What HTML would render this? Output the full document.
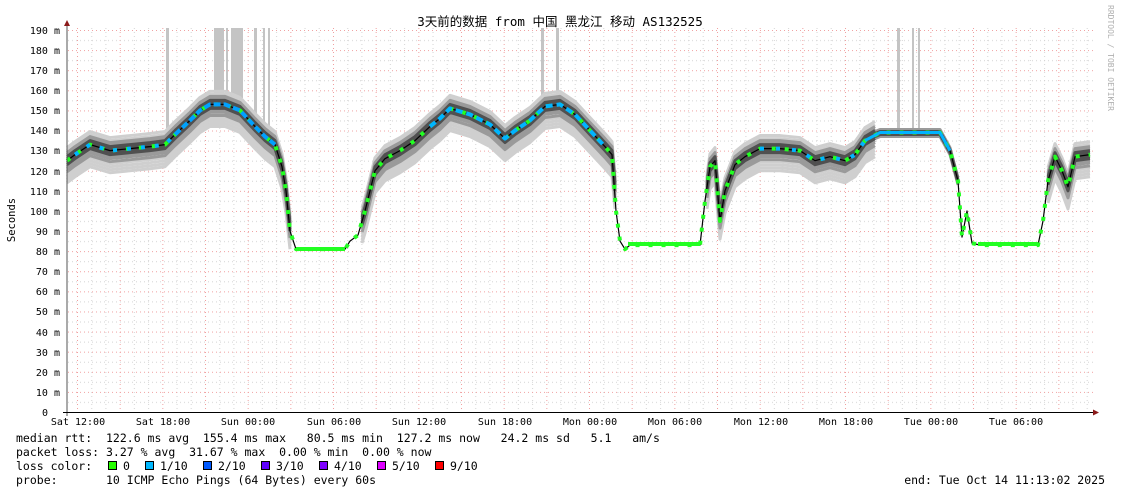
<!DOCTYPE html>
<html><head><meta charset="utf-8"><style>
html,body{margin:0;padding:0;background:#fff;}
body{width:1121px;height:494px;overflow:hidden;position:relative;font-family:"DejaVu Sans Mono","Liberation Mono","Noto Sans CJK SC",monospace;}
svg{position:absolute;left:0;top:0;}
.t{font-family:"DejaVu Sans Mono","Liberation Mono",monospace;font-size:10px;fill:#000;}
.l{font-family:"DejaVu Sans Mono","Liberation Mono",monospace;font-size:11.5px;fill:#000;}
</style></head><body>
<svg width="1121" height="494" viewBox="0 0 1121 494">
<defs>
<pattern id="hg" x="0" y="30" width="2000" height="20.105" patternUnits="userSpaceOnUse">
<line x1="0" y1="0.5" x2="2000" y2="0.5" stroke="#f0a0a0" stroke-dasharray="1,3" stroke-width="1"/>
<line x1="0" y1="10.55" x2="2000" y2="10.55" stroke="#d4d4d4" stroke-dasharray="1,3" stroke-width="1"/>
</pattern>
<pattern id="vg" x="77" y="0" width="42.667" height="2000" patternUnits="userSpaceOnUse">
<line x1="0.5" y1="0" x2="0.5" y2="2000" stroke="#f0a0a0" stroke-dasharray="1,3" stroke-width="1"/>
<line x1="14.7" y1="0" x2="14.7" y2="2000" stroke="#d4d4d4" stroke-dasharray="1,3" stroke-width="1"/>
<line x1="28.9" y1="0" x2="28.9" y2="2000" stroke="#d4d4d4" stroke-dasharray="1,3" stroke-width="1"/>
</pattern>
<g id="m" fill="none">
<polyline vector-effect="non-scaling-stroke" points="67,125 75,128 90,133 110,130 130,131 150,132 165,133 175,138 190,145 200,150 210,153 225,153 240,150 255,142 265,137 275,133 282,122 286,110 290,92"/>
<polyline vector-effect="non-scaling-stroke" points="362,95 365,100 375,120 385,126 400,130 415,135 430,142 440,146 450,151 470,148 490,143 505,136 515,140 530,145 545,152 560,153 575,148 590,140 605,132 612,128 615,112"/>
<polyline vector-effect="non-scaling-stroke" points="707,112 710,122 715,125 720,97 725,110 735,123 745,127 760,131 780,131 800,130 815,125 830,127 845,125 855,128 865,135 875,138"/>
<polyline vector-effect="non-scaling-stroke" points="1048,115 1055,127 1062,120 1068,112 1075,127 1090,128"/>
</g>
<g id="m2" fill="none">
<polyline vector-effect="non-scaling-stroke" points="875,138 880,139 940,139 950,130 958,115"/>
</g>
</defs>
<rect x="67" y="26" width="1026" height="386" fill="url(#vg)"/>
<rect x="67" y="26" width="1026" height="386" fill="url(#hg)"/>
<g fill="#c4c4c4">
<rect x="166" y="28" width="3" height="100"/>
<rect x="214" y="28" width="10" height="70"/>
<rect x="226" y="28" width="2" height="70"/>
<rect x="231" y="28" width="12" height="70"/>
<rect x="254" y="28" width="3" height="90"/>
<rect x="263" y="28" width="2" height="110"/>
<rect x="268" y="28" width="2" height="110"/>
<rect x="541" y="28" width="3" height="70"/>
<rect x="556" y="28" width="3" height="70"/>
<rect x="897" y="28" width="3" height="105"/>
<rect x="912" y="28" width="2" height="105"/>
<rect x="918" y="28" width="2" height="105"/>
</g>
<g transform="matrix(1,0,0,-2.0105,0,412)" fill="none" stroke-linejoin="round">
<g stroke="#cfcfcf" stroke-width="3">
<use href="#m" transform="translate(0,-11)"/><use href="#m" transform="translate(0,-9.5)"/><use href="#m" transform="translate(0,-8)"/><use href="#m" transform="translate(0,-6.5)"/><use href="#m" transform="translate(0,5)"/><use href="#m" transform="translate(0,6.5)"/>
</g>
<g stroke="#9a9a9a" stroke-width="3">
<use href="#m" transform="translate(0,-5.5)"/><use href="#m" transform="translate(0,-4)"/><use href="#m" transform="translate(0,-3)"/><use href="#m" transform="translate(0,3)"/><use href="#m" transform="translate(0,4)"/>
<use href="#m2" transform="translate(0,-2)"/><use href="#m2" transform="translate(0,1.5)"/>
</g>
<g stroke="#505050" stroke-width="3">
<use href="#m" transform="translate(0,-2)"/><use href="#m" transform="translate(0,-1)"/><use href="#m" transform="translate(0,0)"/><use href="#m" transform="translate(0,1)"/><use href="#m" transform="translate(0,2)"/>
<use href="#m2" transform="translate(0,-1)"/><use href="#m2" transform="translate(0,0.5)"/>
</g>
<polyline vector-effect="non-scaling-stroke" stroke="#000" stroke-width="1.2" points="67,125 75,128 90,133 110,130 130,131 150,132 165,133 175,138 190,145 200,150 210,153 225,153 240,150 255,142 265,137 275,133 282,122 286,110 290,90 296,81 345,81 350,85 358,88 365,100 375,120 385,126 400,130 415,135 430,142 440,146 450,151 470,148 490,143 505,136 515,140 530,145 545,152 560,153 575,148 590,140 605,132 612,128 616,100 620,85 625,81 630,83 700,83 705,105 710,122 715,125 720,95 725,110 735,123 745,127 760,131 780,131 800,130 815,125 830,127 845,125 855,128 865,135 880,139 940,139 950,130 958,115 962,87 967,100 972,84 980,83 1038,83 1043,95 1048,115 1055,127 1062,120 1068,112 1075,127 1090,128"/>
<polyline vector-effect="non-scaling-stroke" stroke="#22ff22" stroke-width="4" stroke-dasharray="4,9" points="67,125 75,128 90,133 110,130 130,131 150,132 165,133 175,138 190,145 200,150 210,153 225,153 240,150 255,142 265,137 275,133 282,122 286,110 290,90 296,81 345,81 350,85 358,88 365,100 375,120 385,126 400,130 415,135 430,142 440,146 450,151 470,148 490,143 505,136 515,140 530,145 545,152 560,153 575,148 590,140 605,132 612,128 616,100 620,85 625,81 630,83 700,83 705,105 710,122 715,125 720,95 725,110 735,123 745,127 760,131 780,131 800,130 815,125 830,127 845,125 855,128 865,135 880,139 940,139 950,130 958,115 962,87 967,100 972,84 980,83 1038,83 1043,95 1048,115 1055,127 1062,120 1068,112 1075,127 1090,128"/>
<polyline vector-effect="non-scaling-stroke" stroke="#00b4ff" stroke-width="4" stroke-dasharray="4,10" points="75,128 90,133 110,130 130,131 150,132 165,133 175,138"/>
<polyline vector-effect="non-scaling-stroke" stroke="#00a0ff" stroke-width="4" stroke-dasharray="7,3" points="175,138 190,145 200,150 210,153 225,153 240,150 255,142 265,137 275,133"/>
<polyline vector-effect="non-scaling-stroke" stroke="#00b4ff" stroke-width="4" stroke-dasharray="7,4" points="430,142 440,146 450,151 470,148 490,143 505,136 515,140 530,145 545,152 560,153 575,148 590,140 605,132"/>
<polyline vector-effect="non-scaling-stroke" stroke="#00b4ff" stroke-width="4" stroke-dasharray="4,12" points="760,131 780,131 800,130 815,125 830,127 845,125 855,128 865,135"/>
<polyline vector-effect="non-scaling-stroke" stroke="#00b4ff" stroke-width="3" points="865,135 880,139 940,139 950,130"/>
</g>
<g fill="#22ff22">
<rect x="296" y="247" width="49" height="4"/>
<rect x="628" y="242" width="72" height="4"/>
<rect x="978" y="242" width="60" height="4"/>
</g>
<line x1="67" y1="24" x2="67" y2="416" stroke="#555" stroke-width="1"/>
<line x1="63" y1="412.5" x2="1095" y2="412.5" stroke="#000" stroke-width="1"/>
<polygon points="64,26 70,26 67,20" fill="#8b1a1a"/>
<polygon points="1093,409.5 1093,415.5 1099,412.5" fill="#8b1a1a"/>
<g class="t" text-anchor="end">
<text x="60" y="34">190 m</text><text x="60" y="54">180 m</text><text x="60" y="74">170 m</text><text x="60" y="94">160 m</text><text x="60" y="114">150 m</text><text x="60" y="134">140 m</text><text x="60" y="154">130 m</text><text x="60" y="175">120 m</text><text x="60" y="195">110 m</text><text x="60" y="215">100 m</text><text x="60" y="235">90 m</text><text x="60" y="255">80 m</text><text x="60" y="275">70 m</text><text x="60" y="295">60 m</text><text x="60" y="315">50 m</text><text x="60" y="336">40 m</text><text x="60" y="356">30 m</text><text x="60" y="376">20 m</text><text x="60" y="396">10 m</text><text x="48" y="416">0</text>
</g>
<g class="t" text-anchor="middle">
<text x="78" y="425">Sat 12:00</text><text x="163" y="425">Sat 18:00</text><text x="248" y="425">Sun 00:00</text><text x="334" y="425">Sun 06:00</text><text x="419" y="425">Sun 12:00</text><text x="505" y="425">Sun 18:00</text><text x="590" y="425">Mon 00:00</text><text x="675" y="425">Mon 06:00</text><text x="761" y="425">Mon 12:00</text><text x="846" y="425">Mon 18:00</text><text x="931" y="425">Tue 00:00</text><text x="1016" y="425">Tue 06:00</text>
</g>
<text x="560" y="26" text-anchor="middle" style="font-family:'DejaVu Sans Mono','Noto Sans CJK SC',monospace;font-size:12.5px">3天前的数据 from 中国 黑龙江 移动 AS132525</text>
<text transform="translate(15,220) rotate(-90)" text-anchor="middle" style="font-family:'DejaVu Sans Mono',monospace;font-size:10.5px">Seconds</text>
<text transform="translate(1108,5) rotate(90)" style="font-family:'DejaVu Sans Mono',monospace;font-size:8px;fill:#b0b0b0">RRDTOOL / TOBI OETIKER</text>
<g class="l">
<text x="16" y="442" xml:space="preserve">median rtt:  122.6 ms avg  155.4 ms max   80.5 ms min  127.2 ms now   24.2 ms sd   5.1   am/s</text>
<text x="16" y="456" xml:space="preserve">packet loss: 3.27 % avg  31.67 % max  0.00 % min  0.00 % now</text>
<text x="16" y="470" xml:space="preserve">loss color:  </text>
<text x="16" y="484" xml:space="preserve">probe:       10 ICMP Echo Pings (64 Bytes) every 60s</text>
<text x="1105" y="484" text-anchor="end">end: Tue Oct 14 11:13:02 2025</text>
<text x="123" y="470">0</text><text x="160" y="470">1/10</text><text x="218" y="470">2/10</text><text x="276" y="470">3/10</text><text x="334" y="470">4/10</text><text x="392" y="470">5/10</text><text x="450" y="470">9/10</text>
</g>
<g stroke="#000" stroke-width="1">
<rect x="108.5" y="461.5" width="8" height="8" fill="#26ff00"/>
<rect x="145.5" y="461.5" width="8" height="8" fill="#00b8ff"/>
<rect x="203.5" y="461.5" width="8" height="8" fill="#0059ff"/>
<rect x="261.5" y="461.5" width="8" height="8" fill="#5e00ff"/>
<rect x="319.5" y="461.5" width="8" height="8" fill="#7e00ff"/>
<rect x="377.5" y="461.5" width="8" height="8" fill="#dd00ff"/>
<rect x="435.5" y="461.5" width="8" height="8" fill="#ff0000"/>
</g>
</svg>
</body></html>
